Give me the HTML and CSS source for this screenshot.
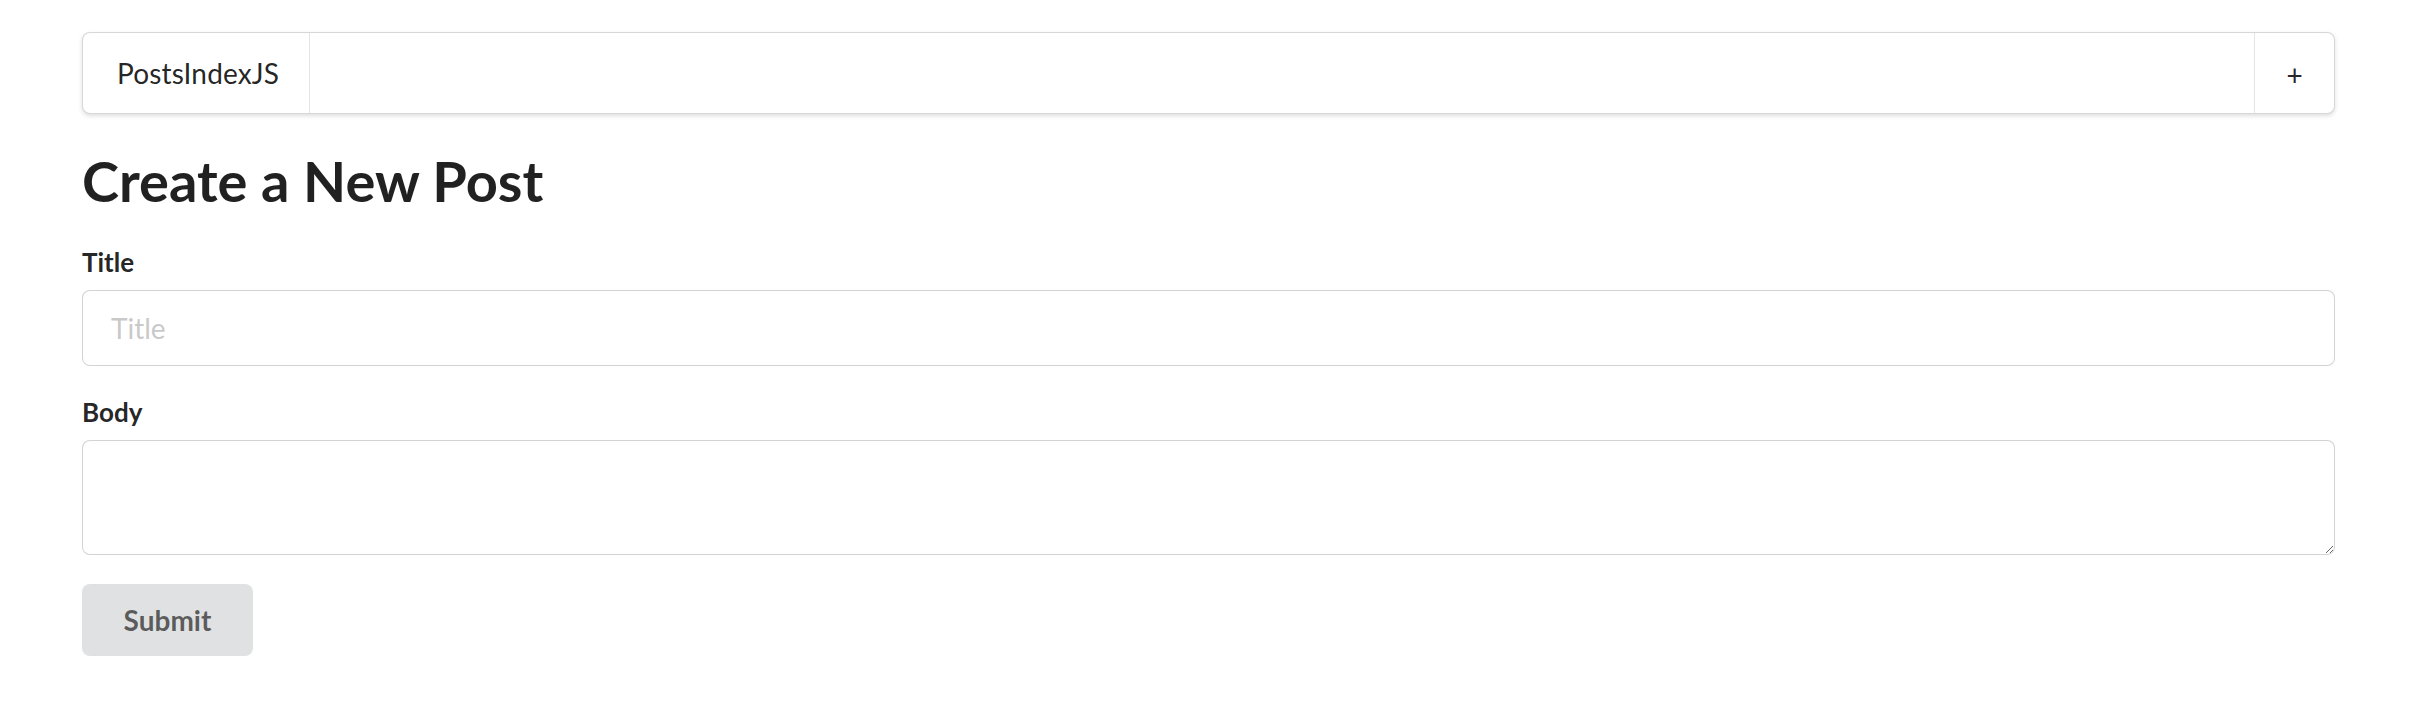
FILE: index.html
```html
<!DOCTYPE html>
<html>
<head>
<meta charset="utf-8">
<link rel="stylesheet" href="styles.css">
</head>
<body>
<div class="container">
  <nav class="menu">
    <a class="item brand">PostsIndexJS</a>
    <div class="spacer"></div>
    <a class="item plus">+</a>
  </nav>
  <h1 class="heading">Create a New Post</h1>
  <form class="form">
    <div class="field">
      <label class="label">Title</label>
      <input class="input" type="text" placeholder="Title">
    </div>
    <div class="field">
      <label class="label">Body</label>
      <textarea class="textarea"></textarea>
    </div>
    <button class="button" type="button">Submit</button>
  </form>
</div>
</body>
</html>
```
FILE: styles.css
```css
html, body {
  margin: 0;
  padding: 0;
  background: #fff;
}
body {
  font-family: Lato, "Helvetica Neue", Arial, sans-serif;
  font-size: 28px;
  color: rgba(0,0,0,.87);
}
.container {
  width: 2253px;
  margin-left: 82px;
  padding-top: 32px;
}
.menu {
  display: flex;
  align-items: stretch;
  height: 82px;
  box-sizing: border-box;
  border: 1px solid rgba(34,36,38,.18);
  border-radius: 8px;
  box-shadow: 0 2px 4px 0 rgba(34,36,38,.15);
  background: #fff;
}
.item {
  display: flex;
  align-items: center;
  padding: 0 32px;
  font-size: 28px;
  line-height: 1;
  color: rgba(0,0,0,.87);
  cursor: pointer;
}
.brand {
  width: 227px;
  box-sizing: border-box;
  padding-left: 34px;
  letter-spacing: 0.15px;
  border-right: 1px solid rgba(34,36,38,.12);
}
.spacer {
  flex: 1;
}
.plus {
  width: 80px;
  box-sizing: border-box;
  justify-content: center;
  padding: 4px 0 0 0;
  border-left: 1px solid rgba(34,36,38,.12);
}
.heading {
  margin: 31px 0 25px;
  font-size: 56px;
  line-height: 72px;
  font-weight: 700;
  color: rgba(0,0,0,.87);
}
.form {
  display: flex;
  flex-direction: column;
}
.field {
  display: flex;
  flex-direction: column;
  margin-bottom: 26px;
}
.field + .field {
  margin-bottom: 28px;
}
.label {
  font-size: 26px;
  font-weight: 700;
  line-height: 40px;
  margin-bottom: 8px;
  color: rgba(0,0,0,.87);
}
.input, .textarea {
  box-sizing: border-box;
  width: 100%;
  border: 1px solid rgba(34,36,38,.2);
  border-radius: 8px;
  font-family: Lato, "Helvetica Neue", Arial, sans-serif;
  font-size: 28px;
  color: rgba(0,0,0,.87);
  background: #fff;
  outline: none;
  margin: 0;
}
.input {
  height: 76px;
  padding: 0 28px;
}
.input::placeholder {
  color: rgba(191,191,191,.87);
}
.textarea {
  height: 115px;
  padding: 20px 28px;
  resize: vertical;
}
.button {
  align-self: flex-start;
  width: 171px;
  height: 72px;
  margin-top: 1px;
  border: none;
  border-radius: 8px;
  background: #e0e1e2;
  color: rgba(0,0,0,.6);
  font-family: Lato, "Helvetica Neue", Arial, sans-serif;
  font-size: 28px;
  font-weight: 700;
  padding: 0;
  cursor: pointer;
}
```
